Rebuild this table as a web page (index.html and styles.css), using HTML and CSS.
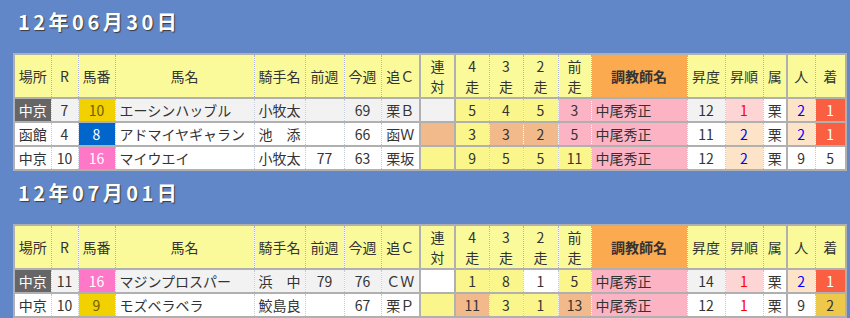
FILE: index.html
```html
<!DOCTYPE html>
<html lang="ja">
<head>
<meta charset="utf-8">
<title>調教</title>
<link rel="stylesheet" href="styles.css">
</head>
<body>
<div class="page">
  <section class="day">
    <h2 class="day-title">12年06月30日</h2>
    <table class="grid">
      <colgroup>
        <col class="c-place"><col class="c-r"><col class="c-num"><col class="c-horse"><col class="c-jockey">
        <col class="c-wk"><col class="c-wk2"><col class="c-oi"><col class="c-ren"><col class="c-run">
        <col class="c-run"><col class="c-run2"><col class="c-run3"><col class="c-trainer"><col class="c-sho">
        <col class="c-sho"><col class="c-zoku"><col class="c-hito"><col class="c-chaku">
      </colgroup>
      <thead>
        <tr>
          <th>場所</th><th>R</th><th>馬番</th><th>馬名</th><th>騎手名</th><th>前週</th><th>今週</th><th>追Ｃ</th>
          <th>連<br>対</th><th>4<br>走</th><th>3<br>走</th><th>2<br>走</th><th>前<br>走</th>
          <th class="h-trainer">調教師名</th><th>昇度</th><th>昇順</th><th>属</th><th>人</th><th>着</th>
        </tr>
      </thead>
      <tbody>
        <tr class="hl">
          <td class="place-hl">中京</td><td>7</td><td class="n-gold">10</td><td class="left">エーシンハッブル</td><td class="left">小牧太</td>
          <td></td><td>69</td><td>栗Ｂ</td><td></td>
          <td class="yel">5</td><td class="yel">4</td><td class="yel">5</td><td class="pnk">3</td>
          <td class="left pnk">中尾秀正</td><td>12</td><td class="lpk red-t">1</td><td class="wht">栗</td><td class="lor blue-t">2</td><td class="win">1</td>
        </tr>
        <tr>
          <td>函館</td><td>4</td><td class="n-blue">8</td><td class="left">アドマイヤギャラン</td><td class="left">池　添</td>
          <td></td><td>66</td><td>函Ｗ</td><td class="pch"></td>
          <td class="yel">3</td><td class="pch">3</td><td class="pch">2</td><td class="pnk">5</td>
          <td class="left pnk">中尾秀正</td><td>11</td><td class="lor blue-t">2</td><td>栗</td><td class="lor blue-t">2</td><td class="win">1</td>
        </tr>
        <tr>
          <td>中京</td><td>10</td><td class="n-pink">16</td><td class="left">マイウエイ</td><td class="left">小牧太</td>
          <td>77</td><td>63</td><td>栗坂</td><td class="yel"></td>
          <td class="yel">9</td><td class="yel">5</td><td class="yel">5</td><td class="yel">11</td>
          <td class="left pnk">中尾秀正</td><td>12</td><td class="lor blue-t">2</td><td>栗</td><td>9</td><td>5</td>
        </tr>
      </tbody>
    </table>
  </section>

  <section class="day">
    <h2 class="day-title">12年07月01日</h2>
    <table class="grid">
      <colgroup>
        <col class="c-place"><col class="c-r"><col class="c-num"><col class="c-horse"><col class="c-jockey">
        <col class="c-wk"><col class="c-wk2"><col class="c-oi"><col class="c-ren"><col class="c-run">
        <col class="c-run"><col class="c-run2"><col class="c-run3"><col class="c-trainer"><col class="c-sho">
        <col class="c-sho"><col class="c-zoku"><col class="c-hito"><col class="c-chaku">
      </colgroup>
      <thead>
        <tr>
          <th>場所</th><th>R</th><th>馬番</th><th>馬名</th><th>騎手名</th><th>前週</th><th>今週</th><th>追Ｃ</th>
          <th>連<br>対</th><th>4<br>走</th><th>3<br>走</th><th>2<br>走</th><th>前<br>走</th>
          <th class="h-trainer">調教師名</th><th>昇度</th><th>昇順</th><th>属</th><th>人</th><th>着</th>
        </tr>
      </thead>
      <tbody>
        <tr class="hl">
          <td class="place-hl">中京</td><td>11</td><td class="n-pink">16</td><td class="left">マジンプロスパー</td><td class="left">浜　中</td>
          <td>79</td><td>76</td><td>ＣＷ</td><td class="wht"></td>
          <td class="yel">1</td><td class="yel">8</td><td class="wht">1</td><td class="yel">5</td>
          <td class="left pnk">中尾秀正</td><td>14</td><td class="lpk red-t">1</td><td class="wht">栗</td><td class="lor blue-t">2</td><td class="win">1</td>
        </tr>
        <tr>
          <td>中京</td><td>10</td><td class="n-gold">9</td><td class="left">モズベラベラ</td><td class="left">鮫島良</td>
          <td></td><td>67</td><td>栗Ｐ</td><td class="yel"></td>
          <td class="pch">11</td><td class="yel">3</td><td class="yel">1</td><td class="pch">13</td>
          <td class="left pnk">中尾秀正</td><td>12</td><td class="red-t">1</td><td>栗</td><td>9</td><td class="second">2</td>
        </tr>
      </tbody>
    </table>
  </section>
</div>
</body>
</html>
```

FILE: styles.css
```css
html, body {
  margin: 0;
  padding: 0;
  background: #6187c9;
}

.page {
  padding: 0 4px 0 13px;
  font-family: "Noto Sans CJK JP", "Noto Sans", sans-serif;
  color: #333;
}

.day-title {
  margin: 0 0 9px 5px;
  height: 44px;
  line-height: 44px;
  font-size: 20px;
  font-weight: bold;
  letter-spacing: 3.5px;
  color: #fff;
  text-shadow: 1px 1px 1px #3a3a3a;
}

.grid {
  border-collapse: collapse;
  table-layout: fixed;
  width: 833px;
  border: 2px solid #b0b0b0;
  font-size: 14px;
  background: #fff;
}

.c-place { width: 37px; }
.c-r { width: 27px; }
.c-num { width: 37px; }
.c-horse { width: 139px; }
.c-jockey { width: 51px; }
.c-wk { width: 39px; }
.c-wk2 { width: 37px; }
.c-oi { width: 39px; }
.c-ren { width: 35px; }
.c-run { width: 34px; }
.c-run2 { width: 35px; }
.c-run3 { width: 33px; }
.c-trainer { width: 96px; }
.c-sho { width: 38px; }
.c-zoku { width: 24px; }
.c-hito { width: 28px; }
.c-chaku { width: 31px; }

.grid th {
  background: #fafa9b;
  font-weight: normal;
  height: 42px;
  line-height: 20px;
  padding: 0;
  text-align: center;
  border-left: 1px dotted #a9b0c9;
  white-space: nowrap;
  overflow: hidden;
}

.grid th.h-trainer {
  background: #fbaa50;
  font-weight: bold;
}

.grid td {
  height: 22px;
  line-height: 22px;
  padding: 0;
  text-align: center;
  border-top: 2px solid #b0b0b0;
  border-left: 1px dotted #c4c8d4;
  white-space: nowrap;
  overflow: hidden;
}

.grid th:nth-child(9), .grid td:nth-child(9),
.grid th:nth-child(10), .grid td:nth-child(10),
.grid th:nth-child(18), .grid td:nth-child(18) {
  border-left: 2px solid #b0b0b0;
}

.grid td.left {
  text-align: left;
  padding-left: 4px;
}

.grid tr.hl td { background: #f2f2f2; }

.grid tr td.place-hl { background: #666; color: #fff; }
.grid tr td.n-gold { background: #f1d100; color: #6f5d00; }
.grid tr td.n-blue { background: #0066cc; color: #fff; }
.grid tr td.n-pink { background: #ff78c8; color: #fff; }
.grid tr td.yel { background: #fbf68b; }
.grid tr td.pch { background: #f2ba8a; }
.grid tr td.pnk { background: #fcb4c4; }
.grid tr td.lpk { background: #fdd5d5; }
.grid tr td.lor { background: #fde4c9; }
.grid tr td.wht { background: #fff; }
.grid tr td.win { background: #fb5f41; color: #fff; }
.grid tr td.second { background: #eec84b; }

.red-t { color: #ff0000; }
.blue-t { color: #0000ff; }
```
